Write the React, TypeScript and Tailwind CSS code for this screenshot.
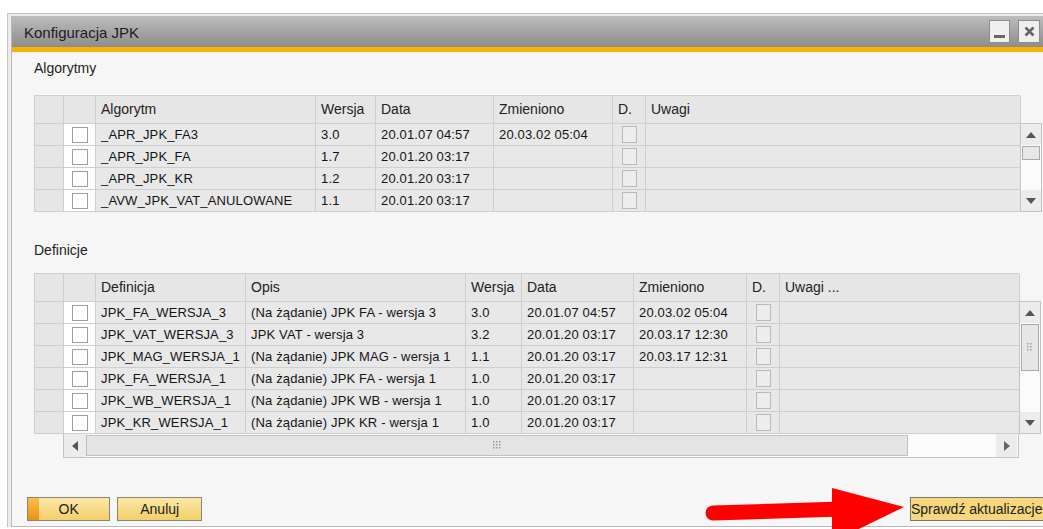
import React from "react";

type Row1 = [string, string, string, string];
type Row2 = [string, string, string, string, string];

const algorithms: Row1[] = [
  ["_APR_JPK_FA3", "3.0", "20.01.07 04:57", "20.03.02 05:04"],
  ["_APR_JPK_FA", "1.7", "20.01.20 03:17", ""],
  ["_APR_JPK_KR", "1.2", "20.01.20 03:17", ""],
  ["_AVW_JPK_VAT_ANULOWANE", "1.1", "20.01.20 03:17", ""],
];

const definitions: Row2[] = [
  ["JPK_FA_WERSJA_3", "(Na żądanie) JPK FA - wersja 3", "3.0", "20.01.07 04:57", "20.03.02 05:04"],
  ["JPK_VAT_WERSJA_3", "JPK VAT - wersja 3", "3.2", "20.01.20 03:17", "20.03.17 12:30"],
  ["JPK_MAG_WERSJA_1", "(Na żądanie) JPK MAG - wersja 1", "1.1", "20.01.20 03:17", "20.03.17 12:31"],
  ["JPK_FA_WERSJA_1", "(Na żądanie) JPK FA - wersja 1", "1.0", "20.01.20 03:17", ""],
  ["JPK_WB_WERSJA_1", "(Na żądanie) JPK WB - wersja 1", "1.0", "20.01.20 03:17", ""],
  ["JPK_KR_WERSJA_1", "(Na żądanie) JPK KR - wersja 1", "1.0", "20.01.20 03:17", ""],
];

function Head({ children }: { children?: React.ReactNode }) {
  return (
    <div className="h-[28px] flex items-center px-[5px] border-r border-b border-[#cfcfcf] bg-[#e6e6e6] text-[14px] text-[#222] whitespace-nowrap overflow-hidden">
      {children}
    </div>
  );
}

function Cell({ children }: { children?: React.ReactNode }) {
  return (
    <div className="h-[22px] flex items-center px-[5px] border-r border-b border-[#cfcfcf] bg-[#e8e8e8] text-[13px] tracking-[0.15px] text-[#141414] whitespace-nowrap overflow-hidden">
      {children}
    </div>
  );
}

function RowHead() {
  return <div className="h-[22px] border-r border-b border-[#cfcfcf] bg-[#e6e6e6]" />;
}

function CheckCell() {
  return (
    <div className="h-[22px] flex items-center justify-center border-r border-b border-[#cfcfcf] bg-white">
      <span className="block w-[16px] h-[16px] border border-[#9d9d9d] bg-white" />
    </div>
  );
}

function FlagCell() {
  return (
    <div className="h-[22px] flex items-center justify-center border-r border-b border-[#cfcfcf] bg-[#e8e8e8]">
      <span className="block w-[15px] h-[17px] border border-[#bababa] bg-[#ededed]" />
    </div>
  );
}

function TriUp() {
  return (
    <svg width="10" height="6" viewBox="0 0 10 6">
      <path d="M0 6 L5 0 L10 6 Z" fill="#555" />
    </svg>
  );
}

function TriDown() {
  return (
    <svg width="10" height="6" viewBox="0 0 10 6">
      <path d="M0 0 L5 6 L10 0 Z" fill="#555" />
    </svg>
  );
}

function TriLeft() {
  return (
    <svg width="6" height="10" viewBox="0 0 6 10">
      <path d="M6 0 L0 5 L6 10 Z" fill="#555" />
    </svg>
  );
}

function TriRight() {
  return (
    <svg width="6" height="10" viewBox="0 0 6 10">
      <path d="M0 0 L6 5 L0 10 Z" fill="#666" />
    </svg>
  );
}

function Grip({ cols, rows }: { cols: number; rows: number }) {
  const dots: React.ReactNode[] = [];
  for (let r = 0; r < rows; r++)
    for (let c = 0; c < cols; c++)
      dots.push(<rect key={`${r}-${c}`} x={c * 3} y={r * 3} width="1.5" height="1.5" fill="#9a9a9a" />);
  return (
    <svg width={cols * 3} height={rows * 3} viewBox={`0 0 ${cols * 3} ${rows * 3}`}>
      {dots}
    </svg>
  );
}

function VScroll({
  height,
  thumb,
  grip,
}: {
  height: number;
  thumb: number;
  grip?: boolean;
}) {
  return (
    <div
      className="w-[22px] flex flex-col border border-[#c4c4c4] bg-[#fbfbfb]"
      style={{ height }}
    >
      <div className="h-[21px] flex items-center justify-center bg-[#ececec]">
        <TriUp />
      </div>
      <div
        className="mx-[1px] mt-[1px] flex items-center justify-center border border-[#a9a9a9] bg-[#e7e7e7]"
        style={{ height: thumb }}
      >
        {grip ? <Grip cols={2} rows={3} /> : null}
      </div>
      <div className="flex-1" />
      <div className="h-[21px] flex items-center justify-center bg-[#ececec]">
        <TriDown />
      </div>
    </div>
  );
}

function Algorithms() {
  return (
    <div className="flex">
      <div className="w-[986px] grid grid-cols-[29px_32px_220px_60px_118px_119px_33px_375px] border-l border-t border-[#cfcfcf]">
        <Head />
        <Head />
        <Head>Algorytm</Head>
        <Head>Wersja</Head>
        <Head>Data</Head>
        <Head>Zmieniono</Head>
        <Head>D.</Head>
        <Head>Uwagi</Head>
        {algorithms.map((r, i) => (
          <React.Fragment key={i}>
            <RowHead />
            <CheckCell />
            <Cell>{r[0]}</Cell>
            <Cell>{r[1]}</Cell>
            <Cell>{r[2]}</Cell>
            <Cell>{r[3]}</Cell>
            <FlagCell />
            <Cell />
          </React.Fragment>
        ))}
      </div>
      <div className="pt-[28px]">
        <VScroll height={89} thumb={14} />
      </div>
    </div>
  );
}

function Definitions() {
  return (
    <div className="flex flex-col">
      <div className="flex">
        <div className="w-[985px] grid grid-cols-[29px_32px_150px_220px_56px_112px_113px_33px_240px] border-l border-t border-[#cfcfcf]">
          <Head />
          <Head />
          <Head>Definicja</Head>
          <Head>Opis</Head>
          <Head>Wersja</Head>
          <Head>Data</Head>
          <Head>Zmieniono</Head>
          <Head>D.</Head>
          <Head>Uwagi ...</Head>
          {definitions.map((r, i) => (
            <React.Fragment key={i}>
              <RowHead />
              <CheckCell />
              <Cell>{r[0]}</Cell>
              <Cell>{r[1]}</Cell>
              <Cell>{r[2]}</Cell>
              <Cell>{r[3]}</Cell>
              <Cell>{r[4]}</Cell>
              <FlagCell />
              <Cell />
            </React.Fragment>
          ))}
        </div>
        <div className="pt-[28px]">
          <VScroll height={133} thumb={47} grip />
        </div>
      </div>
      {/* horizontal scroll bar under the data columns */}
      <div className="ml-[29px] w-[956px] h-[24px] flex border border-t-0 border-[#c4c4c4] bg-[#fbfbfb]">
        <div className="w-[22px] flex items-center justify-center bg-[#ececec]">
          <TriLeft />
        </div>
        <div className="w-[822px] my-[1px] flex items-center justify-center border border-[#c0c0c0] bg-[#e4e4e4]">
          <Grip cols={3} rows={3} />
        </div>
        <div className="flex-1" />
        <div className="w-[21px] mr-[1px] flex items-center justify-center bg-[#ececec]">
          <TriRight />
        </div>
      </div>
    </div>
  );
}

export default function App() {
  return (
    <div className="relative w-[1043px] h-[529px] overflow-hidden bg-white font-['Liberation_Sans',Arial,sans-serif]">
      <div className="ml-[7px] mt-[13px] w-[1042px] border-t border-l border-[#c4c4c4] bg-[#ececec] pt-[2px] pl-[3px]">
        <div className="border-l border-b border-[#b9b9b9]">
          {/* title bar */}
          <div className="h-[31px] flex items-center justify-between pl-[12px] pr-[9px] bg-linear-to-b from-[#bdbdbd] to-[#8d8d8d]">
            <span className="pt-[4px] text-[15px] text-[#1c1c1c]">Konfiguracja JPK</span>
            <div className="flex gap-[8px]">
              <div className="w-[21px] h-[23px] border border-[#8c8c8c] bg-[#efefef] flex items-end justify-center pb-[4px]">
                <span className="block w-[11px] h-[3px] bg-[#666]" />
              </div>
              <div className="w-[22px] h-[23px] border border-[#8c8c8c] bg-[#efefef] flex items-center justify-center">
                <svg width="11" height="11" viewBox="0 0 11 11">
                  <path d="M1.5 1.5 L9.5 9.5 M9.5 1.5 L1.5 9.5" stroke="#666" strokeWidth="2.6" />
                </svg>
              </div>
            </div>
          </div>
          <div className="h-[5px] bg-[#f6b300]" />

          {/* dialog body */}
          <div className="h-[474px] bg-[#f6f6f6] flex flex-col">
            <div className="pl-[22px]">
              <div className="pt-[8px] leading-[17px] text-[14px] text-[#1c1c1c]">Algorytmy</div>
              <div className="mt-[18px]">
                <Algorithms />
              </div>
              <div className="mt-[30px] leading-[17px] text-[14px] text-[#1c1c1c]">Definicje</div>
              <div className="mt-[14px]">
                <Definitions />
              </div>
            </div>

            {/* action buttons */}
            <div className="mt-[39px] pl-[15px] flex">
              <button className="relative w-[84px] h-[24px] border border-[#8a8576] bg-linear-to-b from-[#fbe7a6] to-[#f2cf68] text-[14px] text-[#222] overflow-hidden">
                <span className="absolute left-0 top-0 bottom-0 w-[11px] bg-linear-to-b from-[#f6c14a] to-[#ec8f12]" />
                <span className="relative">OK</span>
              </button>
              <button className="ml-[7px] w-[85px] h-[24px] border border-[#8a8576] bg-linear-to-b from-[#fbe7a6] to-[#f2cf68] text-[14px] text-[#222]">
                Anuluj
              </button>
              <button className="ml-[708px] w-[140px] h-[24px] border border-[#777] bg-[#f6d77c] text-[14px] text-[#222] text-left whitespace-nowrap">
                Sprawdź aktualizacje
              </button>
            </div>
          </div>
        </div>
      </div>

      {/* red arrow pointing at the update button */}
      <svg
        className="absolute left-0 top-0 pointer-events-none"
        width="1043"
        height="529"
        viewBox="0 0 1043 529"
      >
        <path d="M713 513 L842 509" stroke="#ff0000" strokeWidth="15" strokeLinecap="round" />
        <path d="M832 488 L904 507 L832 542 Z" fill="#ff0000" />
      </svg>
    </div>
  );
}
